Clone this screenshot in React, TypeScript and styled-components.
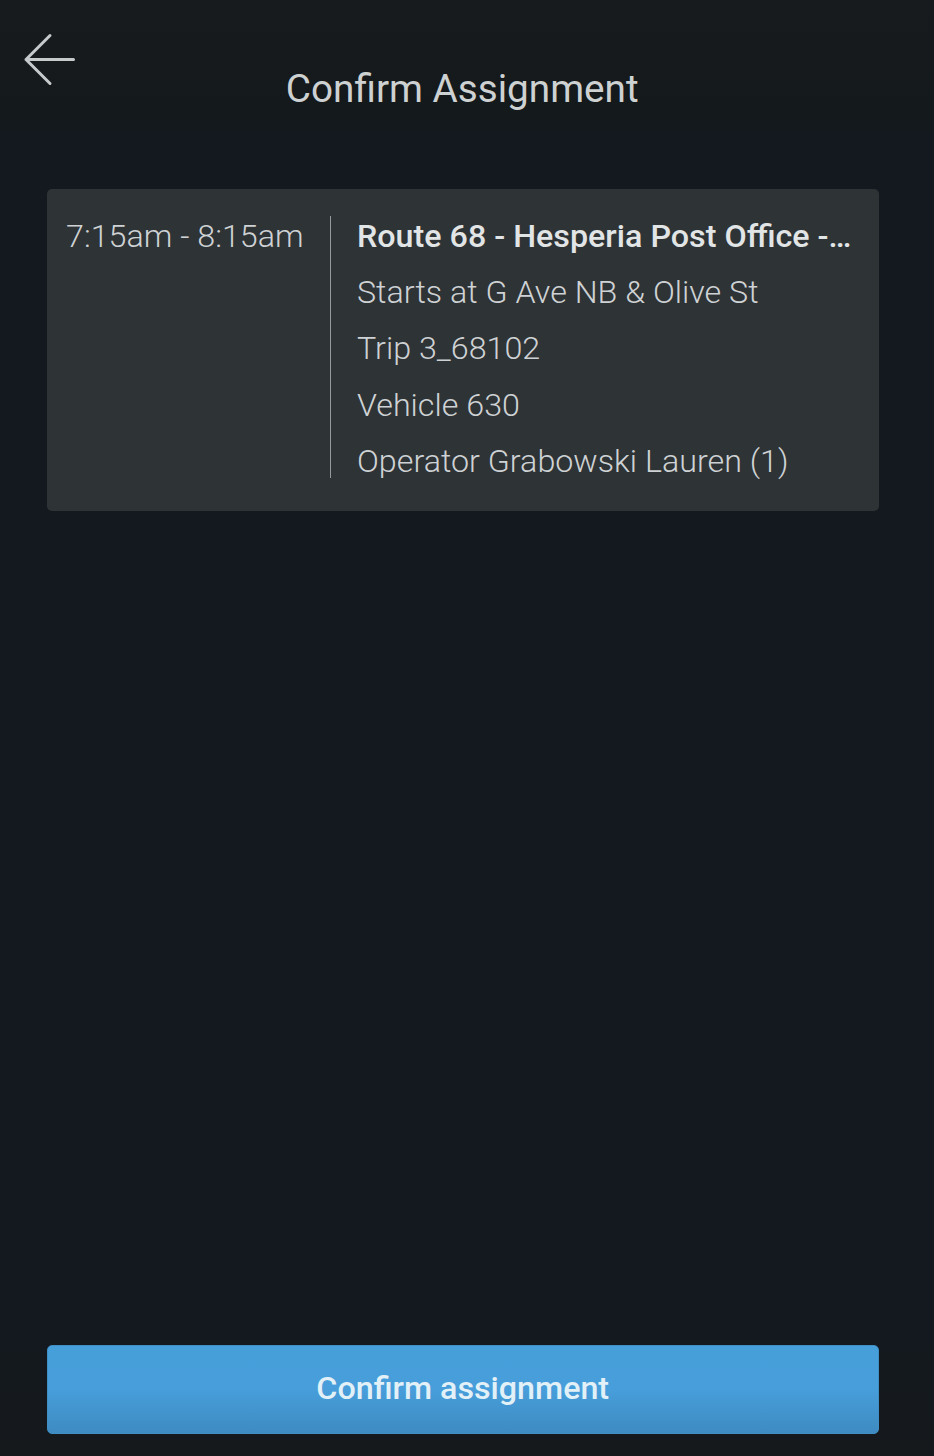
import styled, { createGlobalStyle } from 'styled-components'

const GlobalStyle = createGlobalStyle`
  * {
    box-sizing: border-box;
  }
  body {
    margin: 0;
    background: #141920;
    font-family: Roboto, 'Liberation Sans', sans-serif;
  }
`
const Screen = styled.div`
  display: flex;
  flex-direction: column;
  height: 1456px;
  padding: 0 55.5px 22px 47px;
  background: linear-gradient(#181b1d 0, #14191b 110px, #141920 140px, #141920 1300px, #15191c 1456px);
`
const Header = styled.header`
  display: flex;
  height: 189px;
  margin-left: -47px;
`
const BackButton = styled.button`
  width: 76px;
  height: 86px;
  padding: 33px 0 0 23px;
  border: 0;
  background: none;
  svg {
    display: block;
  }
`
const Title = styled.h1`
  flex: 1;
  margin: 66px 0 0;
  padding-right: 30px;
  color: #ced1d2;
  font-size: 38.7px;
  font-weight: 400;
  line-height: 45px;
  text-align: center;
`
const Card = styled.section`
  display: flex;
  height: 322px;
  padding: 27px 26px 33px 19px;
  border-radius: 5px;
  background: #2e3336;
`
const Time = styled.div`
  width: 264px;
  flex-shrink: 0;
  color: #ced2d4;
  font-size: 32.25px;
  font-weight: 300;
  line-height: 40px;
`
const Details = styled.div`
  display: flex;
  flex: 1;
  flex-direction: column;
  min-width: 0;
  padding-left: 26px;
  border-left: 1px solid #969a9c;
`
const Line = styled.div<{ $bold?: boolean }>`
  flex: 0 0 56.2px;
  color: ${props => props.$bold ? '#e2e5e6' : '#ced2d4'};
  font-size: 32.25px;
  font-weight: ${props => props.$bold ? 500 : 300};
  line-height: 40px;
  white-space: nowrap;
`
const ConfirmButton = styled.button`
  height: 89px;
  margin-top: auto;
  padding: 0 0 3px;
  border: 1px solid #3f8fc4;
  border-radius: 5px;
  background: linear-gradient(#479fda 0%, #479eda 50%, #3e8bc2 100%);
  color: #e2f0f7;
  font-family: inherit;
  font-size: 32.25px;
  font-weight: 500;
`

const details = [
  'Starts at G Ave NB & Olive St',
  'Trip 3_68102',
  'Vehicle 630',
  'Operator Grabowski Lauren (1)'
]

const App = (): JSX.Element => (
  <Screen>
    <GlobalStyle />
    <Header>
      <BackButton aria-label='Back'>
        <svg width='53' height='53' fill='none' stroke='#c6caca' strokeWidth='3' strokeLinecap='round' strokeLinejoin='round'>
          <path d='M50.5 26.5H3M27 2.5L3 26.5L27 50.5' />
        </svg>
      </BackButton>
      <Title>Confirm Assignment</Title>
    </Header>
    <Card>
      <Time>7:15am - 8:15am</Time>
      <Details>
        <Line $bold>Route 68 - Hesperia Post Office -…</Line>
        {details.map(text => <Line key={text}>{text}</Line>)}
      </Details>
    </Card>
    <ConfirmButton>Confirm assignment</ConfirmButton>
  </Screen>
)

export default App
